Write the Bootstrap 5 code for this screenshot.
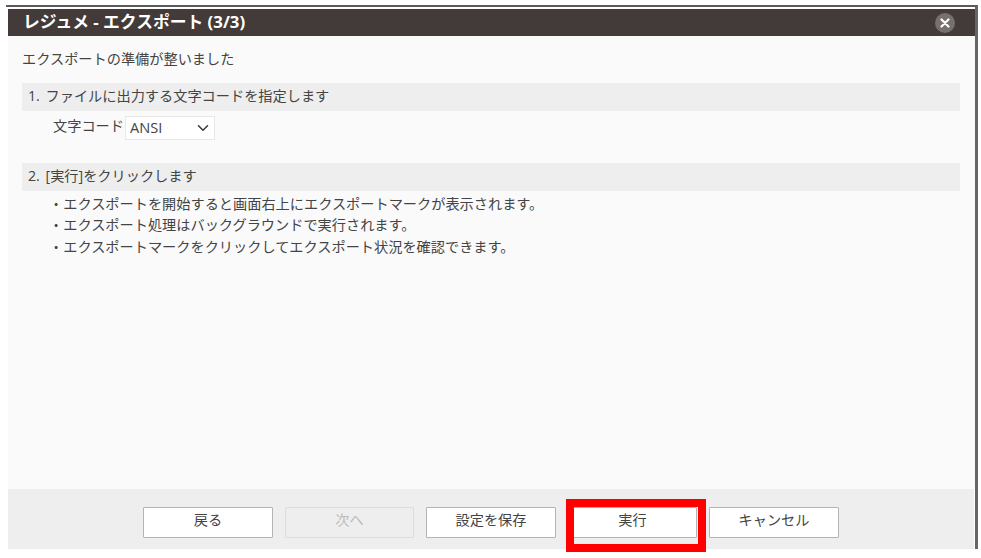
<!DOCTYPE html>
<html lang="ja">
<head>
<meta charset="utf-8">
<title>レジュメ - エクスポート</title>
<link href="https://cdn.jsdelivr.net/npm/bootstrap@5.3.0/dist/css/bootstrap.min.css" rel="stylesheet">
<style>
html,body{height:558px;overflow:hidden;background:#fff;}
body{font-family:"Open Sans","Noto Sans CJK JP",sans-serif;font-size:14.2px;color:#444;padding:5px 0 0 6px;}
.dlg-frame{width:972px;height:544px;border-top:2px solid #5a5a5a;border-right:3px solid #666;padding:2px 0 0 2px;position:relative;}
.dlg-head{height:27px;background:#433b39;color:#fff;font-size:16.8px;font-weight:700;padding-left:15px;line-height:25px;}
.dlg-close{width:20px;height:20px;border-radius:50%;background:#77706e;margin-right:20px;margin-top:4px;}
.dlg-main{height:453px;background:#fafafa;padding:13px 14px 0;}
.dlg-lead{line-height:20px;margin-bottom:14px;}
.dlg-step{height:28px;line-height:25px;background:#eee;padding-left:6px;width:938px;word-spacing:2px;}
.dlg-field{padding:5px 0 0 31px;height:52px;line-height:20px;}
.dlg-select{width:90px;height:24px;font-size:14.6px;padding:0 0 3px 4px;border:1px solid #e8e8e8;border-radius:0;margin-left:1px;color:#444;background-position:right 3px center;background-size:16px 12px;background-color:#fff;font-family:inherit;}
.dlg-notes{list-style:none;margin:2px 0 0;padding:0 0 0 27px;line-height:21.4px;}
.dlg-foot{height:60px;background:#eee;padding-top:18px;width:966px;gap:12px;}
.dlg-btn{width:129.5px;height:31px;padding:0 0 5px;background:#fff;border:1px solid #b4b4b4;border-radius:1px;font-size:14.2px;line-height:22px;color:#444;}
.dlg-btn:disabled{background:#eee;border-color:#ddd;color:#bbb;opacity:1;}
.dlg-flag{position:absolute;left:560px;top:492px;width:140px;height:53px;border:8px solid #f00;pointer-events:none;}
</style>
</head>
<body>
<div class="dlg-frame">
  <div class="dlg-head d-flex justify-content-between">
    <span>レジュメ - エクスポート (3/3)</span>
    <div class="dlg-close d-flex align-items-center justify-content-center">
      <svg width="10" height="10" viewBox="0 0 10 10"><path d="M1.5 1.5 8.5 8.5M8.5 1.5 1.5 8.5" stroke="#fff" stroke-width="2.2" stroke-linecap="round"/></svg>
    </div>
  </div>
  <div class="dlg-main">
    <div class="dlg-lead">エクスポートの準備が整いました</div>
    <div class="dlg-step">1. ファイルに出力する文字コードを指定します</div>
    <div class="dlg-field d-flex align-items-start">
      <span>文字コード</span>
      <select class="form-select dlg-select"><option>ANSI</option></select>
    </div>
    <div class="dlg-step">2. [実行]をクリックします</div>
    <ul class="dlg-notes">
      <li>・エクスポートを開始すると画面右上にエクスポートマークが表示されます。</li>
      <li>・エクスポート処理はバックグラウンドで実行されます。</li>
      <li>・エクスポートマークをクリックしてエクスポート状況を確認できます。</li>
    </ul>
  </div>
  <div class="dlg-foot d-flex justify-content-center">
    <button type="button" class="btn dlg-btn">戻る</button>
    <button type="button" class="btn dlg-btn" disabled>次へ</button>
    <button type="button" class="btn dlg-btn">設定を保存</button>
    <button type="button" class="btn dlg-btn">実行</button>
    <button type="button" class="btn dlg-btn">キャンセル</button>
  </div>
  <div class="dlg-flag"></div>
</div>
</body>
</html>
